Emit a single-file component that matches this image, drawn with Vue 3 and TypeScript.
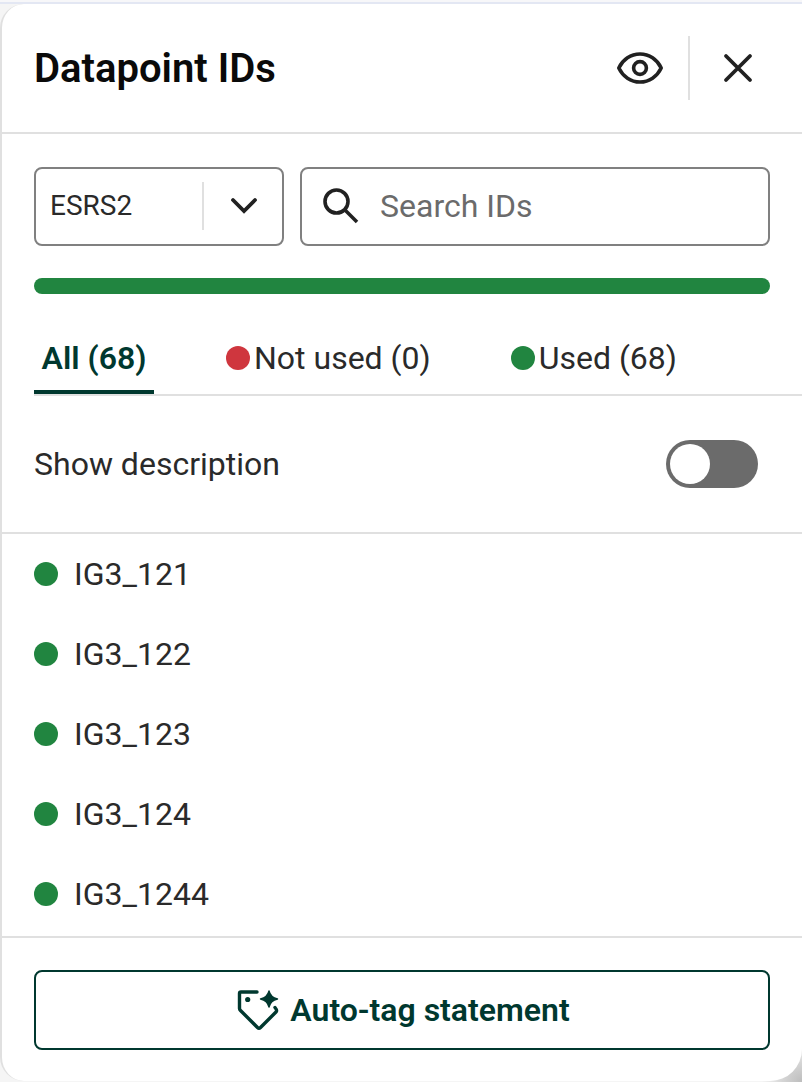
<script setup lang="ts">
const ids: string[] = ['IG3_121', 'IG3_122', 'IG3_123', 'IG3_124', 'IG3_1244']
</script>

<template>
  <div class="page">
    <div class="panel">
      <header class="head">
        <h1 class="title">Datapoint IDs</h1>
        <div class="head-actions">
          <svg class="eye" width="48" height="48" viewBox="0 0 24 24" fill="none" stroke="#212121" stroke-width="1.8">
            <path d="M1.400 12C3.400 7.800 7.400 5 12 5s8.600 2.800 10.600 7C20.600 16.200 16.600 19 12 19S3.400 16.200 1.400 12Z" stroke-linejoin="round" />
            <circle cx="12" cy="12" r="3.200" />
          </svg>
          <span class="vline"></span>
          <svg class="close" width="32" height="32" viewBox="0 0 32 32" fill="none" stroke="#212121" stroke-width="3.800" stroke-linecap="round">
            <path d="M4 4 L28 28 M28 4 L4 28" />
          </svg>
        </div>
      </header>

      <div class="filters">
        <div class="select">
          <span class="select-value">ESRS2</span>
          <span class="select-sep"></span>
          <svg class="chev" width="28" height="18" viewBox="0 0 28 18" fill="none" stroke="#212121" stroke-width="3.800" stroke-linecap="round" stroke-linejoin="miter">
            <path d="M3 3 L14 14 L25 3" />
          </svg>
        </div>
        <div class="search">
          <svg width="38" height="38" viewBox="0 0 38 38" fill="none" stroke="#212121" stroke-width="3.600">
            <circle cx="14.500" cy="14.500" r="11.500" />
            <path d="M23 23 L35 35" />
          </svg>
          <span class="placeholder">Search IDs</span>
        </div>
      </div>

      <div class="progress"></div>

      <nav class="tabs">
        <div class="tab active">All (68)</div>
        <div class="tab t2"><i class="dot red"></i>Not used (0)</div>
        <div class="tab t3"><i class="dot green"></i>Used (68)</div>
      </nav>

      <div class="desc-row">
        <span>Show description</span>
        <span class="toggle"><span class="knob"></span></span>
      </div>

      <ul class="list">
        <li v-for="id in ids" :key="id" class="item"><i class="dot green"></i>{{ id }}</li>
      </ul>

      <footer class="foot">
        <button class="cta" type="button">
          <svg width="44" height="44" viewBox="0 0 44 44" fill="none" stroke="#00382f" stroke-width="3.400" stroke-linecap="round" stroke-linejoin="round">
            <path d="M21 4 H5 Q3.500 4 3.500 5.500 V20.500 Q3.500 21.500 4.500 22.500 L21.500 39.500 Q23 41 24.500 39.500 L40 24 Q41.500 22.500 39 19.500" />
            <circle cx="11.700" cy="11.500" r="2.600" fill="#00382f" stroke="none" />
            <path d="M33 3 Q34.500 9.500 41.500 11 Q34.500 12.500 33 19 Q31.500 12.500 24.500 11 Q31.500 9.500 33 3Z" fill="#00382f" stroke-width="1.400" />
          </svg>
          <span>Auto-tag statement</span>
        </button>
      </footer>
    </div>
  </div>
</template>

<style>
html, body { margin: 0; background: #fff; }
</style>

<style scoped>
.page {
  width: 802px;
  height: 1082px;
  box-sizing: border-box;
  padding-top: 4px;
  background:
    linear-gradient(#f7f7f9 0 2px, #e3e7f3 2px 4px, transparent 4px),
    radial-gradient(circle at 100% 100%, #bdbdbd 0, #d6d6d6 20px, #f5f5f5 40px);
  overflow: hidden;
  font-family: Roboto, "Liberation Sans", sans-serif;
  color: #2a2a2a;
}
.panel {
  height: 1077px;
  box-sizing: border-box;
  background: #fff;
  border-left: 2px solid #e0e0e0;
  border-radius: 24px 0 32px 24px;
  display: flex;
  flex-direction: column;
}
.head {
  height: 130px;
  flex: none;
  box-sizing: border-box;
  display: flex;
  align-items: center;
  justify-content: space-between;
  padding: 0 48px 0 32px;
  border-bottom: 2px solid #e0e0e0;
}
.title { margin: 0; font-size: 40px; font-weight: 600; color: #0a0a0a; }
.head-actions { display: flex; align-items: center; }
.vline { width: 2px; height: 64px; background: #e0e0e0; margin: 0 32px 0 24px; }
.filters {
  display: flex;
  gap: 16px;
  padding: 33px 32px 0;
}
.select, .search {
  height: 79px;
  box-sizing: border-box;
  border: 2px solid #808080;
  border-radius: 8px;
  display: flex;
  align-items: center;
}
.select { width: 250px; padding: 0 22px 2px 14px; }
.select-value { width: 152px; font-size: 28px; }
.select-sep { width: 2px; height: 48px; background: #e0e0e0; margin-right: 26px; }
.search { flex: 1; padding: 0 0 2px 20px; gap: 20px; }
.placeholder { font-size: 32px; color: #6b6b6b; }
.progress {
  height: 16px;
  margin: 32px 32px 0;
  background: #218540;
  border-radius: 8px;
}
.tabs {
  display: flex;
  margin: 30px 0 0 32px;
  height: 72px;
  box-sizing: border-box;
  border-bottom: 2px solid #e0e0e0;
  font-size: 32px;
}
.tab { display: flex; align-items: flex-start; line-height: 68px; height: 70px; box-sizing: border-box; }
.tab .dot { margin: 22px 4px 0 0; }
.active {
  width: 120px;
  justify-content: center;
  font-weight: 600;
  color: #00382f;
  border-bottom: 4px solid #00382f;
}
.t2 { margin-left: 72px; }
.t3 { margin-left: 80px; }
.dot { display: block; width: 24px; height: 24px; border-radius: 50%; flex: none; }
.red { background: #cf363e; }
.green { background: #218540; }
.desc-row {
  height: 138px;
  flex: none;
  box-sizing: border-box;
  padding: 0 44px 0 32px;
  display: flex;
  align-items: center;
  justify-content: space-between;
  border-bottom: 2px solid #e0e0e0;
  font-size: 32px;
}
.toggle {
  width: 92px;
  height: 48px;
  box-sizing: border-box;
  padding: 4px;
  border-radius: 24px;
  background: #6b6b6b;
}
.knob { display: block; width: 40px; height: 40px; border-radius: 50%; background: #fff; }
.list {
  list-style: none;
  margin: 0;
  padding: 0 32px;
  height: 404px;
  flex: none;
  box-sizing: border-box;
  border-bottom: 2px solid #e0e0e0;
}
.item {
  height: 80px;
  display: flex;
  align-items: center;
  gap: 16px;
  font-size: 32px;
}
.foot { padding: 32px 32px 0; }
.cta {
  width: 100%;
  height: 80px;
  padding: 0 0 0 2px;
  background: #fff;
  border: 2px solid #00382f;
  border-radius: 8px;
  display: flex;
  align-items: center;
  justify-content: center;
  gap: 10px;
  font: 600 32px Roboto, "Liberation Sans", sans-serif;
  color: #00382f;
}
</style>
